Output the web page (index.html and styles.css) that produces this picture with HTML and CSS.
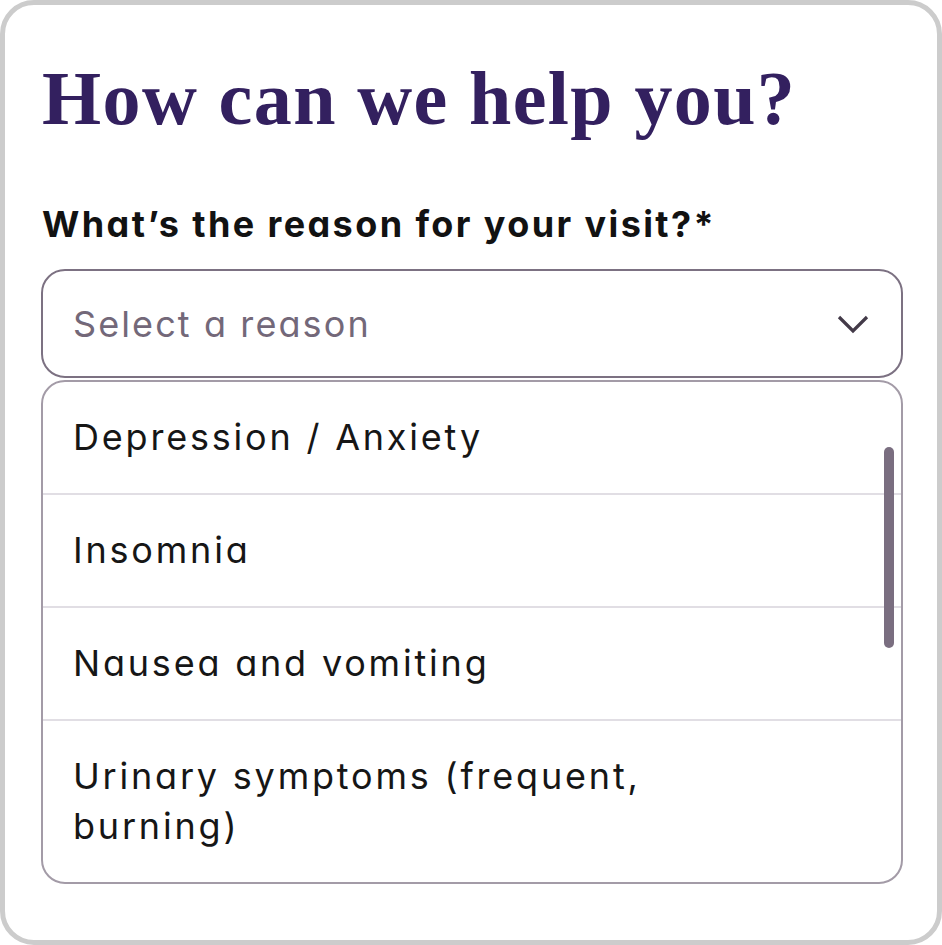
FILE: index.html
```html
<!DOCTYPE html>
<html lang="en">
<head>
<meta charset="utf-8">
<title>How can we help you?</title>
<link rel="stylesheet" href="styles.css">
</head>
<body>
<div class="card">
  <h1 class="title">How can we help you?</h1>
  <label class="label">What’s the reason for your visit?*</label>
  <div class="select">
    <span class="placeholder">Select a reason</span>
    <svg class="chevron" width="32" height="20" viewBox="0 0 32 20"><polyline points="2,3 16,17 30,3" fill="none" stroke="#433a48" stroke-width="3.2"/></svg>
  </div>
  <div class="dropdown">
    <ul class="options">
      <li class="option">Depression / Anxiety</li>
      <li class="option">Insomnia</li>
      <li class="option">Nausea and vomiting</li>
      <li class="option">Urinary symptoms (frequent, burning)</li>
    </ul>
    <div class="thumb"></div>
  </div>
</div>
</body>
</html>
```
FILE: styles.css
```css
html, body {
  margin: 0;
  padding: 0;
  background: #ffffff;
}
.card {
  box-sizing: border-box;
  width: 942px;
  height: 945px;
  border: 5px solid #cccccc;
  border-radius: 34px;
  padding: 0 34px 0 36px;
  background: #ffffff;
  font-family: Inter, "Noto Sans", sans-serif;
  font-feature-settings: "cv11" 1;
}
.title {
  margin: 53px 0 0 1px;
  font-family: "Liberation Serif", serif;
  font-weight: 700;
  font-size: 76px;
  line-height: 80px;
  letter-spacing: 1.4px;
  color: #33205f;
}
.label {
  display: block;
  margin: 64px 0 0 1px;
  font-size: 36px;
  font-weight: 700;
  line-height: 44px;
  letter-spacing: 2.4px;
  color: #121212;
}
.select {
  box-sizing: border-box;
  margin-top: 23px;
  height: 109px;
  border: 2px solid #7c7182;
  border-radius: 24px;
  display: flex;
  align-items: center;
  justify-content: space-between;
  padding: 0 32px 0 30px;
}
.placeholder {
  font-size: 36px;
  letter-spacing: 2.1px;
  color: #736879;
}
.chevron {
  display: block;
}
.dropdown {
  position: relative;
  box-sizing: border-box;
  margin-top: 2px;
  border: 2px solid #a39ba7;
  border-radius: 24px;
  overflow: hidden;
}
.options {
  list-style: none;
  margin: 0;
  padding: 0;
}
.option {
  padding: 30px 200px 31px 30px;
  font-size: 36px;
  line-height: 50px;
  letter-spacing: 2.8px;
  color: #161616;
  border-bottom: 2px solid #e1dee4;
}
.option:last-child {
  border-bottom: none;
}
.thumb {
  position: absolute;
  top: 65px;
  right: 7px;
  width: 10px;
  height: 201px;
  border-radius: 5px;
  background: #7a6e80;
}
```
